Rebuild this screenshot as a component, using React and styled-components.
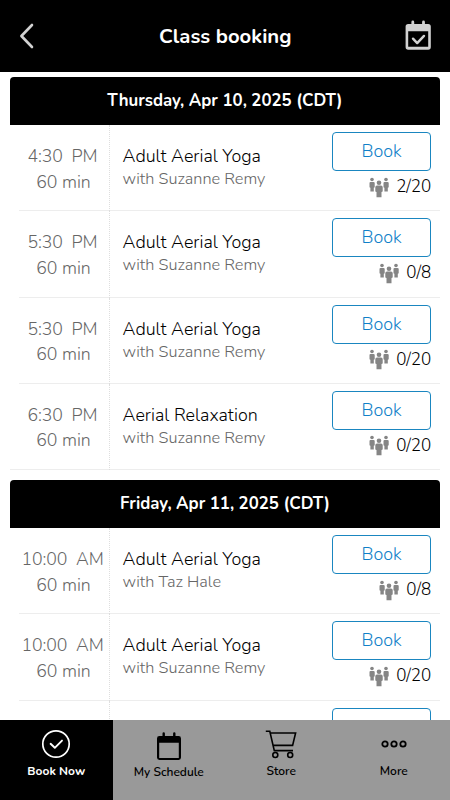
import styled, { createGlobalStyle } from 'styled-components';

const days = [
  {
    title: 'Thursday, Apr 10, 2025 (CDT)',
    classes: [
      { time: '4:30', half: 'PM', name: 'Adult Aerial Yoga', teacher: 'Suzanne Remy', spots: '2/20' },
      { time: '5:30', half: 'PM', name: 'Adult Aerial Yoga', teacher: 'Suzanne Remy', spots: '0/8' },
      { time: '5:30', half: 'PM', name: 'Adult Aerial Yoga', teacher: 'Suzanne Remy', spots: '0/20' },
      { time: '6:30', half: 'PM', name: 'Aerial Relaxation', teacher: 'Suzanne Remy', spots: '0/20' },
    ],
  },
  {
    title: 'Friday, Apr 11, 2025 (CDT)',
    hasMore: true,
    classes: [
      { time: '10:00', half: 'AM', name: 'Adult Aerial Yoga', teacher: 'Taz Hale', spots: '0/8' },
      { time: '10:00', half: 'AM', name: 'Adult Aerial Yoga', teacher: 'Suzanne Remy', spots: '0/20' },
    ],
  },
];

function BackIcon() {
  return (
    <svg width="16" height="28" viewBox="0 0 16 28" fill="none" stroke="#d2d2d2" strokeWidth="2.6" strokeLinecap="round" strokeLinejoin="round">
      <path d="M14 3 3.400 14 14 25" />
    </svg>
  );
}

function BookedIcon() {
  return (
    <svg width="28" height="32" viewBox="0 0 28 32" fill="none">
      <path d="M7.800 2v4M18.500 2v4" stroke="#d2d2d2" strokeWidth="2.800" strokeLinecap="round" />
      <path fillRule="evenodd" fill="#d2d2d2" d="M3.200 4h20a2.600 2.600 0 0 1 2.600 2.600v20.500a2.600 2.600 0 0 1-2.600 2.600h-20a2.600 2.600 0 0 1-2.600-2.600V6.600A2.600 2.600 0 0 1 3.200 4ZM3.200 11.300v15.500h20V11.300Z" />
      <path d="m8 18.700 4.200 4.400 6.800-7.200" stroke="#d2d2d2" strokeWidth="2.400" strokeLinecap="round" strokeLinejoin="round" />
    </svg>
  );
}

function PeopleIcon() {
  return (
    <svg width="20" height="21" viewBox="0 0 20 21" fill="#858585">
      <circle cx="3" cy="2.500" r="1.800" />
      <path d="M1.500 4.900h3q1.200 0 1.200 1.200V10q0 .8-.9.8v3.700H1.400v-3.700q-.9 0-.9-.8V6.100q0-1.200 1-1.200Z" />
      <circle cx="17" cy="2.500" r="1.800" />
      <path d="M15.500 4.900h3q1.200 0 1.200 1.200V10q0 .8-.9.8v3.700h-3.400v-3.700q-.9 0-.9-.8V6.100q0-1.200 1-1.200Z" />
      <circle cx="10" cy="5.800" r="2.300" />
      <path d="M8 8.600h4q1.700 0 1.700 1.600v3.900q0 1-1.200 1v5.100H7.500v-5.100q-1.200 0-1.200-1v-3.900q0-1.600 1.700-1.600Z" />
    </svg>
  );
}

function CheckCircleIcon() {
  return (
    <svg width="30" height="30" viewBox="0 0 30 30" fill="none" stroke="#fff" strokeWidth="1.7">
      <circle cx="15" cy="15" r="13.2" />
      <path d="m9.600 14.800 4.200 4 7.200-7.200" strokeWidth="1.900" strokeLinecap="round" strokeLinejoin="round" />
    </svg>
  );
}

function ScheduleIcon() {
  return (
    <svg width="26" height="30" viewBox="0 0 26 30" fill="none">
      <path d="M7.7 2.4v4M18.3 2.4v4" stroke="#000" strokeWidth="2.4" strokeLinecap="round" />
      <path fillRule="evenodd" fill="#000" d="M3.4 5h19.2A2.400 2.400 0 0 1 25 7.400v19.200a2.400 2.400 0 0 1-2.400 2.400H3.400A2.400 2.400 0 0 1 1 26.600V7.400A2.400 2.400 0 0 1 3.400 5ZM3.200 11.800V27h19.600V11.800Z" />
    </svg>
  );
}

function CartIcon() {
  return (
    <svg width="32" height="30" viewBox="0 0 32 30" fill="none" stroke="#000" strokeWidth="1.6">
      <path d="M.8 2.300h4l4.500 19.300H28M5.400 4h25.200l-3 12.400H8.200" />
      <circle cx="10.300" cy="26" r="2.500" />
      <circle cx="25.200" cy="26" r="2.500" />
    </svg>
  );
}

function DotsIcon() {
  return (
    <svg width="28" height="10" viewBox="0 0 28 10" fill="none" stroke="#000" strokeWidth="1.8">
      <circle cx="5" cy="5" r="2.700" />
      <circle cx="14" cy="5" r="2.700" />
      <circle cx="23" cy="5" r="2.700" />
    </svg>
  );
}

function ClassRow({ item }) {
  return (
    <Row>
      <When>
        <Time>{item.time}{'  '}{item.half}</Time>
        <Duration>60 min</Duration>
      </When>
      <Details>
        <ClassName>{item.name}</ClassName>
        <Teacher>with {item.teacher}</Teacher>
      </Details>
      <Actions>
        <BookButton>Book</BookButton>
        <Spots>
          <PeopleIcon />
          <span>{item.spots}</span>
        </Spots>
      </Actions>
    </Row>
  );
}

// row still being loaded at the bottom of the list
function PendingRow() {
  return (
    <Row>
      <When />
      <Details />
      <Actions>
        <BookButton aria-label="Book" />
      </Actions>
    </Row>
  );
}

function App() {
  return (
    <Screen>
      <GlobalStyle />
      <Header>
        <HeaderButton aria-label="Back"><BackIcon /></HeaderButton>
        <Title>Class booking</Title>
        <HeaderButton $end aria-label="Bookings"><BookedIcon /></HeaderButton>
      </Header>
      <Schedule>
        {days.map((day) => (
          <Day key={day.title}>
            <DayTitle>{day.title}</DayTitle>
            {day.classes.map((item, i) => (
              <ClassRow key={i} item={item} />
            ))}
            {day.hasMore && <PendingRow />}
          </Day>
        ))}
      </Schedule>
      <TabBar>
        <Tab $active>
          <TabIcon><CheckCircleIcon /></TabIcon>
          <span>Book Now</span>
        </Tab>
        <Tab $drop="1px">
          <TabIcon $drop="2px"><ScheduleIcon /></TabIcon>
          <span>My Schedule</span>
        </Tab>
        <Tab>
          <TabIcon><CartIcon /></TabIcon>
          <span>Store</span>
        </Tab>
        <Tab>
          <TabIcon><DotsIcon /></TabIcon>
          <span>More</span>
        </Tab>
      </TabBar>
    </Screen>
  );
}

export default App;

const GlobalStyle = createGlobalStyle`
  * {
    box-sizing: border-box;
  }
  body {
    margin: 0;
    background: #fff;
    font-family: Nunito, Lato, sans-serif;
  }
  svg {
    display: block;
    flex-shrink: 0;
  }
  button {
    font-family: inherit;
    border: 0;
    padding: 0;
    background: none;
  }
`;

const Screen = styled.div`
  display: flex;
  flex-direction: column;
  width: 450px;
  height: 800px;
  overflow: hidden;
`;

const Header = styled.header`
  display: grid;
  grid-template-columns: 60px 1fr 60px;
  align-items: center;
  flex-shrink: 0;
  height: 72px;
  padding: 0 17px 0 17.5px;
  background: #000;
`;

const HeaderButton = styled.button`
  display: flex;
  justify-content: ${(props) => (props.$end ? 'flex-end' : 'flex-start')};
`;

const Title = styled.h1`
  margin: 0;
  color: #fff;
  font-size: 20.3px;
  font-weight: 700;
  line-height: 28px;
  text-align: center;
`;

const Schedule = styled.main`
  flex: 1;
  min-height: 0;
  overflow: hidden;
  padding: 5px 10px 0;
`;

const Day = styled.section`
  margin-bottom: 10px;
`;

const DayTitle = styled.h2`
  height: 48px;
  margin: 0;
  border-radius: 4px 4px 0 0;
  background: #000;
  color: #fff;
  font-size: 16.8px;
  font-weight: 700;
  line-height: 48px;
  text-align: center;
`;

const Row = styled.article`
  display: grid;
  grid-template-columns: 100px 1fr 108px;
  height: 86.25px;
  background: linear-gradient(#ededed, #ededed) right bottom / calc(100% - 9px) 1px no-repeat;

  &:last-child {
    background-size: 100% 1px;
  }
`;

const When = styled.div`
  padding: 19px 0 0 6px;
  border-right: 1px dotted #dedede;
  color: #666;
  font-size: 17.7px;
  font-weight: 300;
  line-height: 25.5px;
  text-align: center;
  white-space: pre;
`;

const Time = styled.div`
  letter-spacing: -0.1px;
`;

const Duration = styled.div`
  padding-left: 2px;
`;

const Details = styled.div`
  padding: 20px 0 0 12.6px;
`;

const ClassName = styled.div`
  color: #000;
  font-size: 17.9px;
  font-weight: 350;
  line-height: 23px;
`;

const Teacher = styled.div`
  color: #666;
  font-size: 16.3px;
  font-weight: 300;
  line-height: 22px;
`;

const Actions = styled.div`
  display: flex;
  flex-direction: column;
  align-items: flex-end;
  padding: 7px 9px 0 0;
`;

const BookButton = styled.button`
  width: 99px;
  height: 39px;
  border: 1px solid #1a86c0;
  border-radius: 4px;
  background: #fff;
  color: #1080c8;
  font-size: 17.9px;
  font-weight: 350;
  line-height: 37px;
`;

const Spots = styled.div`
  display: flex;
  align-items: center;
  gap: 7px;
  margin-top: 4px;
  color: #000;
  font-size: 17px;
  font-weight: 300;
  letter-spacing: -0.1px;
  line-height: 24px;
`;

const TabBar = styled.nav`
  display: grid;
  grid-template-columns: repeat(4, 1fr);
  flex-shrink: 0;
  height: 80px;
`;

const Tab = styled.button`
  display: flex;
  flex-direction: column;
  align-items: center;
  padding-top: ${(props) => props.$drop || '0'};
  background: ${(props) => (props.$active ? '#000' : '#999')};
  color: ${(props) => (props.$active ? '#fff' : '#000')};
  font-size: 12px;
  font-weight: ${(props) => (props.$active ? 700 : 600)};
  line-height: 13px;
`;

const TabIcon = styled.div`
  display: flex;
  align-items: center;
  justify-content: center;
  height: 43px;
  margin-top: 2px;
  padding-top: ${(props) => props.$drop || '0'};
`;
